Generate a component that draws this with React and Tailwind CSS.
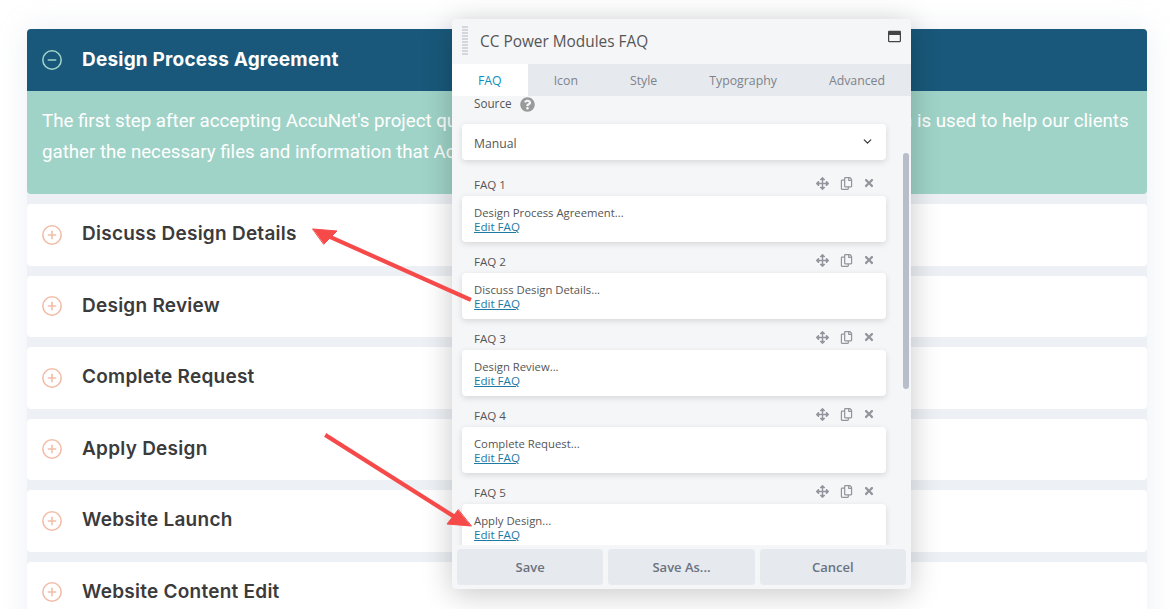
import React from "react";
import { ChevronDown, CircleMinus, CirclePlus } from "lucide-react";
import { FaArrowsAlt, FaRegCopy, FaTimes, FaQuestionCircle, FaRegWindowMaximize } from "react-icons/fa";

const ITEMS = [
  "Discuss Design Details",
  "Design Review",
  "Complete Request",
  "Apply Design",
  "Website Launch",
  "Website Content Edit",
];

const FAQS = [
  "Design Process Agreement...",
  "Discuss Design Details...",
  "Design Review...",
  "Complete Request...",
  "Apply Design...",
];

const TABS = ["FAQ", "Icon", "Style", "Typography", "Advanced"];

const headingFont = "font-['Inter','Liberation_Sans',sans-serif]";

function AccordionItem({ title }) {
  return (
    <div className="flex h-[61.5px] shrink-0 items-center rounded bg-white pl-[14px]">
      <CirclePlus size={22} strokeWidth={1.7} className="text-[#f2bda8]" />
      <span className={`-mt-[1px] ml-[19px] text-[19px] font-semibold tracking-[0.25px] text-[#3b3b3b] ${headingFont}`}>{title}</span>
    </div>
  );
}

function FaqRow({ index, label }) {
  return (
    <div className="mb-[8px]">
      <div className="flex h-[22px] items-center justify-between pr-[11px] pl-[12px] text-[#92969c]">
        <span className="mt-[2px] text-[11.6px] text-[#555]">FAQ {index}</span>
        <div className="-mt-[2px] flex items-center gap-[10.5px]">
          <FaArrowsAlt size={13} />
          <FaRegCopy size={13} />
          <FaTimes size={12} />
        </div>
      </div>
      <div className="mt-[1px] h-[46px] rounded bg-white px-[12px] pt-[10px] text-[11.3px] leading-[14px] text-[#555] shadow-[0_2px_6px_rgba(0,0,0,0.13)]">
        <div>{label}</div>
        <a className="text-[11.6px] text-[#1d7aa3] underline">Edit FAQ</a>
      </div>
    </div>
  );
}

function SettingsPanel() {
  return (
    <div className="absolute top-[19px] left-[452px] flex h-[570px] w-[459px] flex-col overflow-hidden rounded bg-[#f5f6f8] font-['Open_Sans','Noto_Sans',sans-serif] shadow-[0_5px_30px_rgba(0,0,0,0.22)]">
      <div className="relative flex h-[45px] shrink-0 items-center pl-[28px] text-[15.4px] text-[#555]">
        <span className="absolute top-[7px] left-[10px] h-[30px] w-[6px] bg-[repeating-linear-gradient(to_bottom,#d3d7dc_0_2px,transparent_2px_3px)]" />
        CC Power Modules FAQ
        <FaRegWindowMaximize size={13} className="absolute top-[11px] right-[10px] text-[#444]" />
      </div>
      <div className="flex h-[32px] shrink-0 bg-[#e6e9ed]">
        {TABS.map((tab, i) => (
          <div
            key={tab}
            className={`flex flex-auto items-center justify-center pt-[2px] text-[12.3px] ${i === 0 ? "bg-white text-[#0e8fc2]" : "text-[#7d838c]"}`}
          >
            {tab}
          </div>
        ))}
      </div>
      <div className="relative min-h-0 flex-1 overflow-hidden pr-[25px] pl-[10px]">
        <div className="flex h-[16px] items-center pl-[12px] text-[11.7px] text-[#555]">
          Source
          <FaQuestionCircle size={15} className="ml-[8px] text-[#9a9a9a]" />
        </div>
        <div className="mt-[12px] flex h-[36px] items-center justify-between rounded bg-white pt-[4px] pr-[12px] pl-[12px] text-[12.2px] text-[#555] shadow-[0_2px_6px_rgba(0,0,0,0.13)]">
          Manual
          <ChevronDown size={13} strokeWidth={2.2} className="-mt-[5px] text-[#333]" />
        </div>
        <div className="mt-[13px]">
          {FAQS.map((label, i) => (
            <FaqRow key={label} index={i + 1} label={label} />
          ))}
        </div>
        <span className="absolute top-[57px] right-[2px] h-[236px] w-[6px] rounded-full bg-[#b7bdc9]" />
      </div>
      <div className="flex h-[44px] shrink-0 gap-[5px] px-[5px] pt-[4px] pb-[4px]">
        {["Save", "Save As...", "Cancel"].map((label) => (
          <button key={label} className="flex-1 rounded-sm bg-[#e6e9ed] pt-[1px] text-[13px] font-semibold text-[#6b7280]">
            {label}
          </button>
        ))}
      </div>
    </div>
  );
}

function Arrows() {
  return (
    <svg className="pointer-events-none absolute inset-0" width="1171" height="609" viewBox="0 0 1171 609">
      <g fill="#f64a4a" stroke="#f64a4a" strokeLinecap="square">
        <line x1="469" y1="299" x2="328" y2="236" strokeWidth="4.2" />
        <polygon points="313,229 337,231 324,244" strokeWidth="1" />
        <line x1="327" y1="436" x2="458" y2="519" strokeWidth="4.2" />
        <polygon points="471,526 447,524 458,510" strokeWidth="1" />
      </g>
    </svg>
  );
}

export default function App() {
  return (
    <div className="relative h-[609px] w-[1171px] overflow-hidden bg-white">
      <div className="pt-[29px] pr-[24px] pl-[27px]">
        <div className="flex h-[620px] flex-col gap-[10px] rounded bg-[#edf0f4] shadow-[0_0_30px_rgba(170,180,210,0.22)]">
          <div className="shrink-0 overflow-hidden rounded">
            <div className="flex h-[62px] items-center bg-[#19587a] pl-[14px]">
              <CircleMinus size={22} strokeWidth={1.7} className="text-[#9fd4c8]" />
              <span className={`ml-[19px] text-[19px] font-bold tracking-[0.2px] text-white ${headingFont}`}>
                Design Process Agreement
              </span>
            </div>
            <div className="h-[103px] bg-[#9fd3c7] px-[15px] pt-[15px] font-['Roboto',sans-serif] text-[18.7px] leading-[31px] whitespace-nowrap text-white">
              The first step after accepting AccuNet's project quote is to complete our Design Process,{"\u00a0"} this application is used to help our clients
              <br />
              gather the necessary files and information that AccuNet needs to get started on your new website.
            </div>
          </div>
          {ITEMS.map((title) => (
            <AccordionItem key={title} title={title} />
          ))}
        </div>
      </div>
      <SettingsPanel />
      <Arrows />
    </div>
  );
}
